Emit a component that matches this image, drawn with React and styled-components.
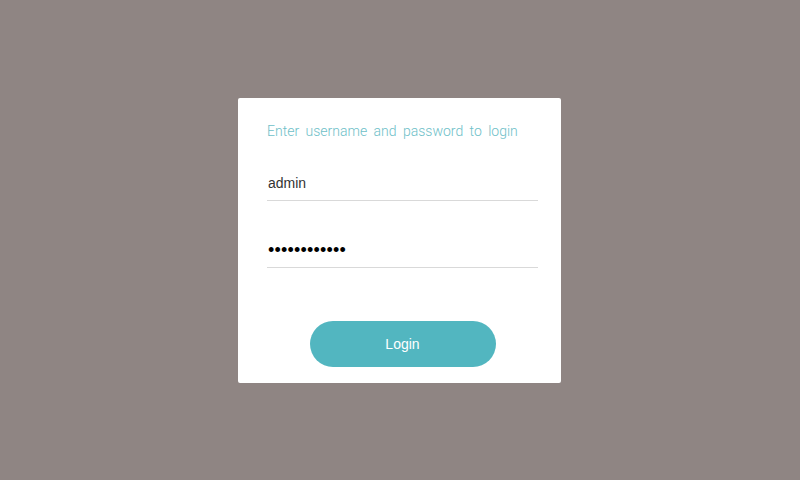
import React from "react";
import styled, { createGlobalStyle } from "styled-components";

const GlobalStyle = createGlobalStyle`
  html, body {
    margin: 0;
    padding: 0;
    background: #8f8583;
    font-family: "Liberation Sans", Arial, sans-serif;
  }
  * { box-sizing: border-box; }
`;

const Page = styled.div`
  width: 100%;
  min-height: 100vh;
  display: flex;
  align-items: center;
  justify-content: center;
  padding-right: 1px;
`;

const Card = styled.form`
  width: 323px;
  height: 285px;
  background: #ffffff;
  border-radius: 2px;
  padding: 25px 23px 15px 29px;
  display: flex;
  flex-direction: column;
`;

const Title = styled.p`
  margin: 0 0 27px 0;
  font-family: Roboto, "Liberation Sans", sans-serif;
  font-size: 14px;
  line-height: 17px;
  font-weight: 300;
  word-spacing: 3px;
  color: #6ec0c8;
`;

const Field = styled.input`
  width: 271px;
  height: 34px;
  border: none;
  border-bottom: 1px solid #d9d9d9;
  outline: none;
  padding: 0 0 0 1px;
  margin-bottom: ${(p) => p.$gap || 0}px;
  font-family: "Liberation Sans", Arial, sans-serif;
  font-size: ${(p) => (p.type === "password" ? 18 : 14)}px;
  letter-spacing: ${(p) => (p.type === "password" ? 0.2 : 0)}px;
  color: ${(p) => (p.type === "password" ? "#000000" : "#333333")};
  background: transparent;
  caret-color: #333333;
`;

const Button = styled.button`
  align-self: center;
  width: 186px;
  height: 46px;
  border: none;
  border-radius: 23px;
  background: #52b6c0;
  color: #ffffff;
  font-family: "Liberation Sans", Arial, sans-serif;
  font-size: 14px;
  cursor: pointer;
`;

export default function App() {
  return (
    <>
      <GlobalStyle />
      <Page>
        <Card onSubmit={(e) => e.preventDefault()}>
          <Title>Enter username and password to login</Title>
          <Field type="text" defaultValue="admin" $gap={33} />
          <Field type="password" defaultValue="adminpass123" $gap={53} autoFocus />
          <Button type="submit">Login</Button>
        </Card>
      </Page>
    </>
  );
}
